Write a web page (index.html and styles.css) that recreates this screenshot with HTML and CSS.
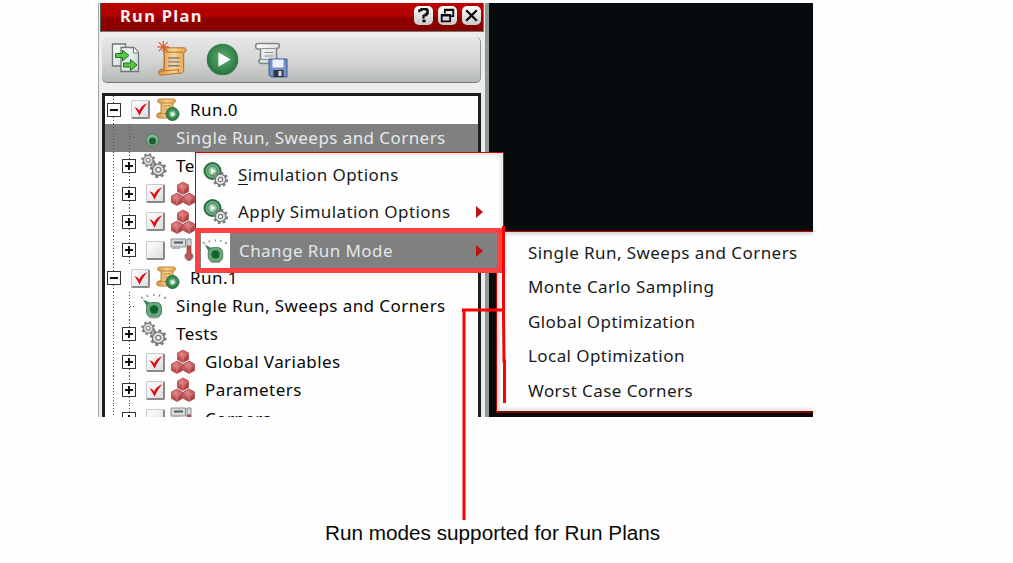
FILE: index.html
```
<!DOCTYPE html>
<html lang="en">
<head>
<meta charset="utf-8">
<title>Run Plan</title>
<link rel="stylesheet" href="styles.css">
</head>
<body>
<svg class="defs" aria-hidden="true">
  <defs>
    <linearGradient id="gold" x1="0" x2="1"><stop offset="0" stop-color="#d8913f"/><stop offset=".55" stop-color="#fbd58d"/><stop offset="1" stop-color="#e5a149"/></linearGradient>
    <linearGradient id="paper" x1="0" x2="1" y2="1"><stop offset="0" stop-color="#fff"/><stop offset="1" stop-color="#ccd1d1"/></linearGradient>
    <radialGradient id="green" cx=".5" cy=".45" r=".6"><stop offset="0" stop-color="#5dab70"/><stop offset=".6" stop-color="#3b8b52"/><stop offset="1" stop-color="#1b6a34"/></radialGradient>
    <radialGradient id="cube" cx=".4" cy=".3" r=".7"><stop offset="0" stop-color="#e08a8a"/><stop offset=".6" stop-color="#c65558"/><stop offset="1" stop-color="#96383d"/></radialGradient>
  </defs>
  <symbol id="i-copy" viewBox="0 0 28 30">
    <path d="M1 1h13v5l4 3v14H1z" fill="url(#paper)" stroke="#70777a" stroke-width="1.300"/>
    <path d="M9.500 4.500h13l4.500 5v19H9.500z" fill="url(#paper)" stroke="#70777a" stroke-width="1.300"/>
    <path d="M22 4.500v5.500h5" fill="#fff" stroke="#70777a"/>
    <path d="M4 10.500h7V7l6.500 5.500-6.500 5.500v-3.500H4zM12 20h7v-3.500l6.500 5.500-6.500 5.500V24h-7z" fill="#5ac83e" stroke="#1d7822"/>
  </symbol>
  <symbol id="i-new" viewBox="0 0 32 38">
    <path d="M8 8h20c3 0 4 4 0 5v17c0 3-1 5-5 4l-17 2c-5 1-5-5-1-6h3z" fill="url(#gold)" stroke="#b56c2b"/>
    <path d="M8 9v21M9 12.500h18M4 32l19-1.500c-1 2 0 3 1 3.500" fill="none" stroke="#b56c2b"/>
    <path d="M12 18.500h12M12 22.500h12M12 26.500h12" stroke="#7080a5" stroke-width="1.400"/>
    <path d="M7 1v11M1 7h12M2.500 2.500l9 9M11.500 2.500l-9 9" stroke="#d35a28" stroke-width="1.200"/>
  </symbol>
  <symbol id="i-play" viewBox="0 0 32 32">
    <circle cx="16" cy="16" r="14.800" fill="url(#green)" stroke="#397d4a"/><path d="M12 9v14l12-7z" fill="#f7faf7"/>
  </symbol>
  <symbol id="i-save" viewBox="0 0 34 36">
    <path d="M3 1.500h20c3 0 2 5-1 5v15H8c-3 0-5-2-3-4h1V7H3C0 6 1 1.500 3 1.500z" fill="url(#paper)" stroke="#80878a" stroke-width="1.600"/>
    <path d="M7 6.500h14M10 10.500h9M10 14h9M5 17.500h10" fill="none" stroke="#8d9395" stroke-width="1.200"/>
    <path d="M14.500 17h18v18h-16l-2-2z" fill="#7992c5" stroke="#3e5790"/><path d="M18 17.500h11v8H18z" fill="#eef2f8"/><path d="M19 28h10v7H19z" fill="#303743"/><path d="M24 29h3v5h-3z" fill="#d8dee6"/>
  </symbol>
  <symbol id="i-run" viewBox="0 0 24 24">
    <path d="M4 1h13c4 0 3 4 0 4v15H3c-3 0-3-5 0-5h2V5H3C1 4 1 1 4 1z" fill="url(#gold)" stroke="#c38443"/>
    <path d="M5 5h12M8 8h7M8 11h5M3 15.500h7" stroke="#bd8452"/>
    <circle cx="16.500" cy="16" r="6.500" fill="url(#green)" stroke="#226e3a"/><circle cx="16.500" cy="16" r="3" fill="#8ec79a"/><path d="M15.500 14v4.500l3.500-2.200z" fill="#fff"/>
  </symbol>
  <symbol id="i-gear" viewBox="0 0 24 24">
    <circle cx="12" cy="12" r="8" fill="#e2e3e3" stroke="#77797a" stroke-width="2"/>
    <circle cx="12" cy="12" r="10" fill="none" stroke="#77797a" stroke-width="3" stroke-dasharray="4 3.850"/>
    <circle cx="12" cy="12" r="3.300" fill="#fff" stroke="#77797a" stroke-width="1.800"/>
  </symbol>
  <symbol id="i-tests" viewBox="0 0 26 26">
    <use href="#i-gear" x="0" y="0" width="14.500" height="14.500"/><use href="#i-gear" x="8.500" y="8" width="17.500" height="17.500"/>
  </symbol>
  <symbol id="i-cubes" viewBox="0 0 26 26">
    <g fill="url(#cube)" stroke="#ad494d" stroke-width=".8">
      <path d="M13 1l5.500 3v6.500L13 13.500l-5.500-3V4z"/><path d="M7 12l5.500 3v6.500L7 24.500l-5.500-3V15z"/><path d="M19 12l5.500 3v6.500L19 24.500l-5.500-3V15z"/>
    </g>
    <path d="M8 4.500l5 2.500 5-2.500M13 7v6M2 15.500L7 18l5-2.500M7 18v6M14 15.500l5 2.500 5-2.500M19 18v6" fill="none" stroke="#dc8583" stroke-width=".9"/>
  </symbol>
  <symbol id="i-corner" viewBox="0 0 24 24">
    <path d="M1 1h14.500v8H1z" fill="#d8dadb" stroke="#8a8e90"/><path d="M4 3.500h9v2H4z" fill="#555a5c"/><path d="M2 8h8v3H2z" fill="#adb2b4"/>
    <path d="M17 1h4v13.500c4 3 2 8-2 8s-6-5-2-8z" fill="#d6d8d9" stroke="#85898b"/><path d="M17.500 8h3v7c3 2 1.500 6.500-1.500 6.500s-4.500-4.500-1.500-6.500z" fill="#c85250" stroke="#a93d3f"/>
  </symbol>
  <symbol id="i-knob" viewBox="0 0 28 26">
    <path d="M1 4l2 1.500M7 2l1 2M14 1v2M20 1.500l-1 2M26 4l-2 1.500" stroke="#777e7b" stroke-width="1.200"/>
    <path d="M3 6.500l4.500 2L12 11.500l-4 4z" fill="#3f8355"/>
    <rect x="6.500" y="9.500" width="15" height="14.500" rx="5" fill="#69a77c" stroke="#4f7d5e"/>
    <circle cx="14" cy="16.500" r="4.200" fill="#12632e"/><path d="M8 23l2 2h8l2-2" fill="none" stroke="#94a79b"/>
  </symbol>
  <symbol id="i-simopt" viewBox="0 0 26 26">
    <circle cx="9.500" cy="9" r="8" fill="#6eac80" stroke="#28723f" stroke-width="2"/><circle cx="9.500" cy="9" r="4.700" fill="#98c6a4" stroke="#438a57"/><path d="M8 6.200v5.600l4.500-2.800z" fill="#fff"/>
    <use href="#i-gear" x="9.500" y="9.500" width="16" height="16"/>
  </symbol>
  <symbol id="i-check" viewBox="0 0 18 18"><path d="M2.500 6.500C5 7 6 8 7.500 10 9.500 6.500 12 4 16 2.500 12.500 7 10.500 10 8 15.500 6.500 12 4.500 9 2.500 6.500z" fill="#dc0c12"/></symbol>
</svg>

<main class="page">
  <section class="figure">
    <div class="panel">
      <header class="titlebar">
        <span class="title">Run Plan</span>
        <span class="window-buttons">
          <svg class="wbtn" viewBox="0 0 18 18"><path d="M5 6V4h2V3h5v1h1v3h-1v1h-1v1H9v3" fill="none" stroke="#0b0b0b" stroke-width="2"/><path d="M8 13h3v2.500H8z"/></svg>
          <svg class="wbtn" viewBox="0 0 18 18"><path d="M6.500 7V3.500h8v6H11M6 4h9M3.500 8.500h8v6h-8zM3 9h9" fill="none" stroke="#0b0b0b" stroke-width="1.700"/></svg>
          <svg class="wbtn" viewBox="0 0 18 18"><path d="M4 4l10 10M14 4l-10 10" stroke="#0b0b0b" stroke-width="2.200"/></svg>
        </span>
      </header>
      <div class="toolbar">
        <svg class="tool copy"><use href="#i-copy"/></svg>
        <svg class="tool new"><use href="#i-new"/></svg>
        <svg class="tool play"><use href="#i-play"/></svg>
        <svg class="tool save"><use href="#i-save"/></svg>
      </div>
      <div class="tree">
        <div class="row root"><i class="toggle minus"></i><span class="check"><svg><use href="#i-check"/></svg></span><svg class="ico run"><use href="#i-run"/></svg><span class="label">Run.0</span></div>
        <div class="row mode selected"><i class="branch"></i><svg class="ico knob"><circle cx="12.500" cy="15" r="7" fill="#60836b"/><circle cx="12.500" cy="15" r="5.500" fill="#86b394"/><circle cx="12.500" cy="16" r="3.500" fill="#1b6035"/></svg><span class="label">Single Run, Sweeps and Corners</span></div>
        <div class="row child"><i class="toggle"></i><svg class="ico tests"><use href="#i-tests"/></svg><span class="label">Tests</span></div>
        <div class="row child"><i class="toggle"></i><span class="check"><svg><use href="#i-check"/></svg></span><svg class="ico cubes"><use href="#i-cubes"/></svg></div>
        <div class="row child"><i class="toggle"></i><span class="check"><svg><use href="#i-check"/></svg></span><svg class="ico cubes"><use href="#i-cubes"/></svg></div>
        <div class="row child"><i class="toggle"></i><span class="check"></span><svg class="ico corner"><use href="#i-corner"/></svg></div>
        <div class="row root"><i class="toggle minus"></i><span class="check"><svg><use href="#i-check"/></svg></span><svg class="ico run"><use href="#i-run"/></svg><span class="label">Run.1</span></div>
        <div class="row mode"><i class="branch"></i><svg class="ico knob"><use href="#i-knob"/></svg><span class="label">Single Run, Sweeps and Corners</span></div>
        <div class="row child"><i class="toggle"></i><svg class="ico tests"><use href="#i-tests"/></svg><span class="label">Tests</span></div>
        <div class="row child"><i class="toggle"></i><span class="check"><svg><use href="#i-check"/></svg></span><svg class="ico cubes"><use href="#i-cubes"/></svg><span class="label">Global Variables</span></div>
        <div class="row child"><i class="toggle"></i><span class="check"><svg><use href="#i-check"/></svg></span><svg class="ico cubes"><use href="#i-cubes"/></svg><span class="label">Parameters</span></div>
        <div class="row child"><i class="toggle"></i><span class="check"></span><svg class="ico corner"><use href="#i-corner"/></svg><span class="label">Corners</span></div>
      </div>
    </div>
    <div class="canvas"></div>
    <div class="submenu">
      <div class="option">Single Run, Sweeps and Corners</div>
      <div class="option">Monte Carlo Sampling</div>
      <div class="option">Global Optimization</div>
      <div class="option">Local Optimization</div>
      <div class="option">Worst Case Corners</div>
    </div>
    <div class="menu">
      <div class="item"><svg class="mico"><use href="#i-simopt"/></svg><span class="mlabel"><span class="key">S</span>imulation Options</span></div>
      <div class="item"><svg class="mico"><use href="#i-simopt"/></svg><span class="mlabel">Apply Simulation Options</span><i class="arrow"></i></div>
      <div class="item active"><span class="cell"><svg><use href="#i-knob"/></svg></span><span class="mlabel">Change Run Mode</span><i class="arrow"></i></div>
    </div>
  </section>
  <svg class="callout" viewBox="0 0 50 300"><path d="M41.500 0V90l.5 45 .5 0v42M0 84H42M2 83V294" fill="none" stroke="#f00" stroke-width="3"/></svg>
  <p class="caption">Run modes supported for Run Plans</p>
</main>
</body>
</html>
```
FILE: styles.css
```
* { box-sizing: border-box; }
body { margin: 0; background: #fefefe; }
.defs { position: absolute; width: 0; height: 0; }
.page { position: relative; width: 1013px; height: 563px; overflow: hidden; padding: 3px 0 0 98px; }
.figure {
  position: relative; display: flex; width: 715px; height: 414px; overflow: hidden;
  font: 17px/28px "Noto Sans", "Open Sans", sans-serif; letter-spacing: .43px; color: #080808;
}
.panel {
  flex: none; width: 391px; height: 414px; padding: 0 5px 0 1px; overflow: hidden;
  background: #eeedee; border-left: 1px solid #a3a8a8; border-right: 4px solid #929894;
}
.canvas { flex: 1; background: #070b0d; }
.titlebar {
  display: flex; align-items: center; justify-content: space-between; height: 29px; width: 384px;
  padding: 0 2px 3px 19px; background: linear-gradient(#bb0000, #b20000 45%, #900000 55%, #850000);
  border-left: 1px solid #555; border-bottom: 1px solid #777; border-right: 1px solid #777;
}
.title { color: #f6eeee; font-weight: 700; font-size: 16.500px; letter-spacing: 1.300px; padding-top: 1px; }
.window-buttons { display: flex; gap: 5px; }
.wbtn { width: 19px; height: 19px; border-radius: 5px; background: linear-gradient(#fff, #c9c9c9); }
.toolbar {
  display: flex; align-items: flex-start; height: 46px; width: 379px; margin: 5px 0 10px 2px; padding: 0 0 0 8px;
  background: linear-gradient(#e9e8e9, #d3d4d4 55%, #b5bab8); border-radius: 5px;
  border-right: 1px solid #929292; border-bottom: 1px solid #747977;
}
.tool.copy { width: 29px; height: 30px; margin: 6px 0 0 1px; }
.tool.new { width: 32px; height: 37px; margin: 3px 0 0 16px; }
.tool.play { width: 33px; height: 33px; margin: 6px 0 0 18px; }
.tool.save { width: 35px; height: 36px; margin: 5px 0 0 15px; }
.tree {
  width: 379px; height: 360px; margin-left: 2px; overflow: hidden;
  background: #fefefe; border: 3px solid #1c1e20; border-bottom: 0;
}
.row { display: flex; align-items: center; height: 28.100px; background: repeating-linear-gradient(#555 0 1px, transparent 1px 3px) 8px 0 / 1px 100% no-repeat; }
.row:first-child { margin-top: -.5px; }
.row.child, .row.mode { padding-left: 17px; background:
  repeating-linear-gradient(#555 0 1px, transparent 1px 3px) 8px 0 / 1px 100% no-repeat,
  repeating-linear-gradient(#555 0 1px, transparent 1px 3px) 24px 0 / 1px 100% no-repeat; }
.row.root { padding-left: 2px; }
.row.selected { background-color: #808080; color: #e6e9eb; }
.toggle {
  width: 14px; height: 14px; flex: none; border: 1px solid #333;
  background: linear-gradient(#111, #111) 2px 5px / 8px 2px no-repeat, linear-gradient(#111, #111) 5px 2px / 2px 8px no-repeat, #fefefe;
}
.toggle.minus { background: linear-gradient(#111, #111) 2px 5px / 8px 2px no-repeat, #fefefe; }
.branch { width: 6px; height: 1px; flex: none; margin-left: 8px; background: repeating-linear-gradient(90deg, #555 0 1px, transparent 1px 3px); }
.check {
  width: 19px; height: 19px; flex: none; margin-left: 10px;
  background: linear-gradient(135deg, #fff, #ddd); border: 1px solid #c9c9c9; border-right: 2px solid #888; border-bottom: 2px solid #888; border-radius: 2px;
}
.check svg { display: block; width: 17px; height: 17px; }
.ico { flex: none; }
.run { width: 24px; height: 24px; margin: 0 10px 0 6px; }
.knob { width: 28px; height: 26px; margin: 0 8px 0 4px; }
.tests { width: 26px; height: 26px; margin: 0 9px 0 5px; }
.cubes { width: 26px; height: 26px; margin: 0 9px 0 5px; }
.corner { width: 24px; height: 24px; margin: 0 11px 0 5px; }
.label { white-space: nowrap; }
.menu {
  position: absolute; left: 97px; top: 149px; width: 309px; height: 121px; padding-top: 3px;
  background: #fefefe; border: 1px solid #d40000; box-shadow: inset -3px 3px 3px #e8e8e8;
}
.item { display: flex; align-items: center; height: 37.500px; padding: 0 20px 0 7px; color: #181a1b; }
.mico { width: 26px; height: 26px; flex: none; margin-right: 9px; }
.mlabel { flex: 1; white-space: nowrap; }
.key { border-bottom: 1px solid #111; display: inline-block; line-height: 19px; }
.arrow { border-left: 7px solid #bc1015; border-top: 6px solid transparent; border-bottom: 6px solid transparent; }
.item.active {
  height: 45px; margin: -3px -1px 0 -1px; padding: 0 14px 0 1px; background: #808080; color: #e3e7e7;
  border: 5px solid #ff4040; border-right-width: 7px;
}
.cell { display: flex; align-items: center; justify-content: center; width: 29px; height: 35px; margin-right: 9px; background: #fefefe; }
.cell svg { width: 27px; height: 26px; }
.submenu {
  position: absolute; left: 398px; top: 228px; width: 330px; height: 182px; padding: 4px 0 0 31px;
  background: #fefefe; border: 1px solid #c90000; border-bottom: 2px solid #850000; box-shadow: inset 3px 3px 3px #ddd, inset 0 -3px 3px #e8e8e8;
}
.option { height: 34.400px; line-height: 34.400px; white-space: nowrap; color: #181a1b; }
.callout { position: absolute; left: 462px; top: 226px; width: 50px; height: 300px; }
.caption { width: 338px; margin: 103px 0 0 227px; font: 20.720px/26px "Liberation Sans", Arial, sans-serif; white-space: nowrap; color: #080808; }
```
